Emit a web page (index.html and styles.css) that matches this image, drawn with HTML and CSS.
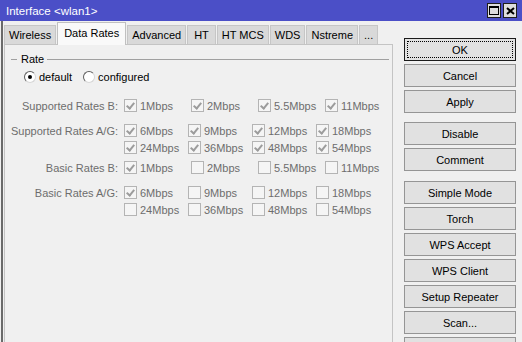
FILE: index.html
```html
<!DOCTYPE html>
<html lang="en">

<head>
  <meta charset="UTF-8">
  <title>Interface &lt;wlan1&gt;</title>
  <link rel="stylesheet" href="styles.css">
</head>

<body>

  <div class="titlebar">
    <span class="title">Interface &lt;wlan1&gt;</span>
    <div class="controls">
      <span class="ctl">
        <svg width="10" height="9" viewBox="0 0 10 9"><rect x="0.5" y="0.5" width="9" height="8" fill="none" stroke="#000"/><line x1="0" y1="1.5" x2="10" y2="1.5" stroke="#000"/></svg>
      </span>
      <span class="ctl">
        <svg width="9" height="8" viewBox="0 0 9 8"><path d="M1 1L8 7M8 1L1 7" stroke="#000" stroke-width="2"/></svg>
      </span>
    </div>
  </div>

  <div class="main">
    <div class="tabbox">
      <div class="tabs">
        <span class="tab">Wireless</span>
        <span class="tab active">Data Rates</span>
        <span class="tab">Advanced</span>
        <span class="tab wide">HT</span>
        <span class="tab">HT MCS</span>
        <span class="tab">WDS</span>
        <span class="tab">Nstreme</span>
        <span class="tab">...</span>
      </div>

      <div class="panel">
        <div class="legend">Rate</div>
        <div class="radios">
          <span class="radio on"></span><span class="radio-text">default</span>
          <span class="radio"></span><span class="radio-text">configured</span>
        </div>

        <div class="rates">
          <!-- Supported Rates B -->
          <div class="grp">
            <div class="row b">
              <span class="lbl">Supported Rates B:</span>
              <span class="cell"><span class="cb on"></span>1Mbps</span>
              <span class="cell"><span class="cb on"></span>2Mbps</span>
              <span class="cell"><span class="cb on"></span>5.5Mbps</span>
              <span class="cell"><span class="cb on"></span>11Mbps</span>
            </div>
          </div>

          <!-- Supported Rates A/G -->
          <div class="grp tight">
            <div class="row ag">
              <span class="lbl">Supported Rates A/G:</span>
              <span class="cell"><span class="cb on"></span>6Mbps</span>
              <span class="cell"><span class="cb on"></span>9Mbps</span>
              <span class="cell"><span class="cb on"></span>12Mbps</span>
              <span class="cell"><span class="cb on"></span>18Mbps</span>
            </div>
            <div class="row ag">
              <span class="lbl"></span>
              <span class="cell"><span class="cb on"></span>24Mbps</span>
              <span class="cell"><span class="cb on"></span>36Mbps</span>
              <span class="cell"><span class="cb on"></span>48Mbps</span>
              <span class="cell"><span class="cb on"></span>54Mbps</span>
            </div>
          </div>

          <!-- Basic Rates B -->
          <div class="grp">
            <div class="row b">
              <span class="lbl">Basic Rates B:</span>
              <span class="cell"><span class="cb on"></span>1Mbps</span>
              <span class="cell"><span class="cb"></span>2Mbps</span>
              <span class="cell"><span class="cb"></span>5.5Mbps</span>
              <span class="cell"><span class="cb"></span>11Mbps</span>
            </div>
          </div>

          <!-- Basic Rates A/G -->
          <div class="grp">
            <div class="row ag">
              <span class="lbl">Basic Rates A/G:</span>
              <span class="cell"><span class="cb on"></span>6Mbps</span>
              <span class="cell"><span class="cb"></span>9Mbps</span>
              <span class="cell"><span class="cb"></span>12Mbps</span>
              <span class="cell"><span class="cb"></span>18Mbps</span>
            </div>
            <div class="row ag">
              <span class="lbl"></span>
              <span class="cell"><span class="cb"></span>24Mbps</span>
              <span class="cell"><span class="cb"></span>36Mbps</span>
              <span class="cell"><span class="cb"></span>48Mbps</span>
              <span class="cell"><span class="cb"></span>54Mbps</span>
            </div>
          </div>
        </div>
      </div>
    </div>

    <div class="side">
      <button type="button" class="btn default">OK</button>
      <button type="button" class="btn">Cancel</button>
      <button type="button" class="btn sep">Apply</button>
      <button type="button" class="btn">Disable</button>
      <button type="button" class="btn sep2">Comment</button>
      <button type="button" class="btn">Simple Mode</button>
      <button type="button" class="btn">Torch</button>
      <button type="button" class="btn">WPS Accept</button>
      <button type="button" class="btn">WPS Client</button>
      <button type="button" class="btn">Setup Repeater</button>
      <button type="button" class="btn">Scan...</button>
      <!-- next button continues below the window edge -->
      <button type="button" class="btn" aria-label="More"></button>
    </div>
  </div>

</body>

</html>
```

FILE: styles.css
```css
* {
  box-sizing: border-box;
}

html,
body {
  margin: 0;
  padding: 0;
}

body {
  width: 522px;
  height: 342px;
  overflow: hidden;
  background-color: #f0f0f0;
  font-family: "Liberation Sans", Arial, sans-serif;
  font-size: 11px;
  color: #000;
}

/* window title */
.titlebar {
  height: 21px;
  background-color: #4b4fc7;
  display: flex;
  align-items: center;
  padding: 0 5px 0 6px;
}

.title {
  flex: 1;
  color: #fff;
  font-size: 11.5px;
  padding-top: 1px;
}

.controls {
  display: flex;
  gap: 2px;
}

.ctl {
  width: 14px;
  height: 15px;
  background-color: #dedede;
  border: 1px solid #1e1e1e;
  display: flex;
  align-items: center;
  justify-content: center;
}

/* body of the window */
.main {
  display: flex;
  height: 321px;
  margin-left: 1px;
  border-left: 2px solid #6a6a6a;
  padding-top: 1px;
}

.tabbox {
  width: 389px;
  margin-left: 1px;
  display: flex;
  flex-direction: column;
}

.tabs {
  display: flex;
  align-items: flex-end;
  gap: 1px;
  height: 22px;
}

.tab {
  height: 19px;
  line-height: 19px;
  padding: 0 4px;
  background-color: #d9d9d9;
  border: 1px solid #c6c6c6;
  border-bottom: none;
}

.tab.wide {
  padding: 0 6px;
}

.tab.active {
  position: relative;
  z-index: 1;
  height: 23px;
  line-height: 20px;
  margin-bottom: -1px;
  padding: 0 6px;
  background-color: #f9f9f9;
  border-color: #c0c0c0;
}

.panel {
  flex: 1;
  border: 1px solid #c4c4c4;
  border-bottom: none;
  padding-top: 7px;
}

.legend {
  display: flex;
  align-items: center;
  height: 14px;
  padding: 0 3px 0 6px;
}

.legend::before {
  content: "";
  width: 6px;
  border-top: 1px solid #a0a0a0;
  margin-right: 4px;
}

.legend::after {
  content: "";
  flex: 1;
  border-top: 1px solid #a0a0a0;
  margin-left: 3px;
}

.radios {
  display: flex;
  align-items: center;
  height: 14px;
  margin-top: 4px;
  padding-left: 19px;
}

.radio {
  width: 12px;
  height: 12px;
  border-radius: 50%;
  border: 1px solid;
  border-color: #5e5e5e #d6d6d6 #d6d6d6 #5e5e5e;
  background-color: #fff;
  display: flex;
  align-items: center;
  justify-content: center;
  margin-right: 3px;
}

.radio.on::after {
  content: "";
  width: 4px;
  height: 4px;
  border-radius: 50%;
  background-color: #000;
}

.radio-text {
  margin-right: 11px;
}

.rates {
  margin-top: 13px;
}

.grp {
  margin-bottom: 8px;
}

.grp.tight {
  margin-bottom: 3px;
}

.row {
  display: flex;
  align-items: center;
  height: 17px;
  color: #6d6d6d;
}

.lbl {
  width: 119px;
  padding-right: 6px;
  text-align: right;
}

.cell {
  display: flex;
  align-items: center;
  width: 67px;
}

.ag .cell {
  width: 64px;
}

.cb {
  position: relative;
  width: 13px;
  height: 13px;
  margin-right: 3px;
  border: 1px solid #b4b4b4;
  background-color: #f5f5f5;
}

.cb.on::after {
  content: "";
  position: absolute;
  left: 3px;
  top: 1px;
  width: 3px;
  height: 6px;
  border-right: 2px solid #9c9c9c;
  border-bottom: 2px solid #9c9c9c;
  transform: rotate(40deg);
}

/* buttons on the right */
.side {
  width: 112px;
  margin-left: 11px;
  padding-top: 16px;
  display: flex;
  flex-direction: column;
}

.btn {
  height: 23px;
  margin: 0 0 3px 0;
  padding: 0;
  flex-shrink: 0;
  font-family: inherit;
  font-size: 11px;
  color: #000;
  background-color: #e1e1e1;
  border: 1px solid #959595;
}

.btn.default {
  border-color: #1a1a1a;
  outline: 1px dotted #000;
  outline-offset: -4px;
}

.btn.sep {
  margin-bottom: 9px;
}

.btn.sep2 {
  margin-bottom: 10px;
}
```
